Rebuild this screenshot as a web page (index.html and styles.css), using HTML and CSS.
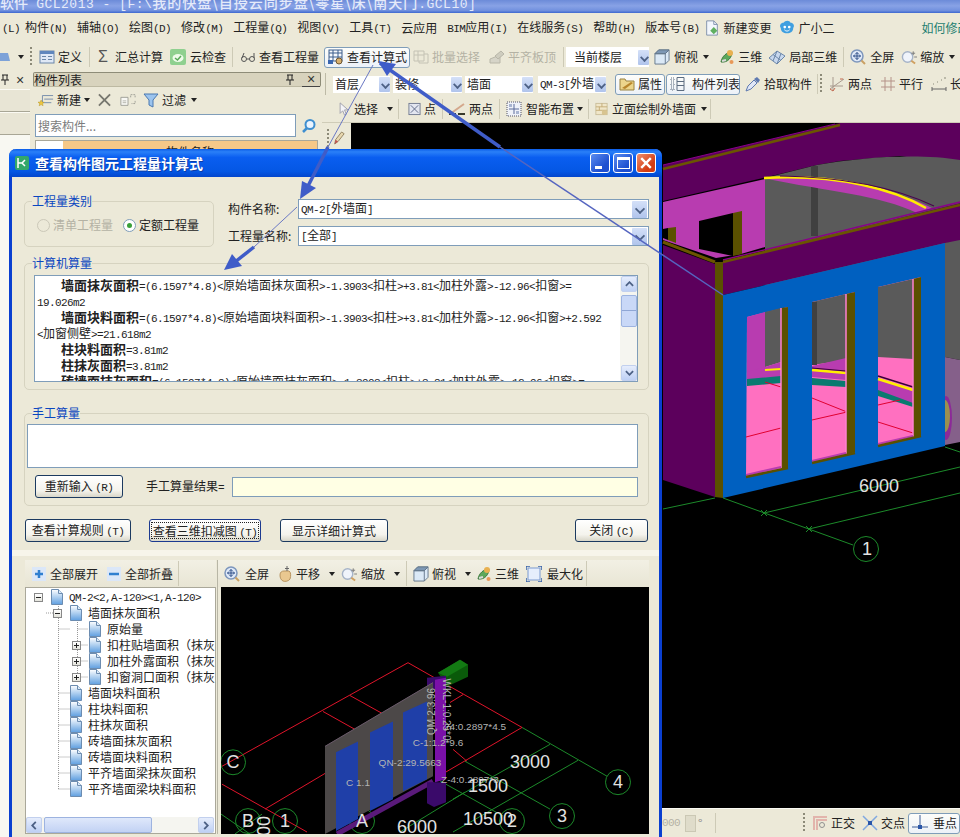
FILE: index.html
```html
<!DOCTYPE html>
<html lang="zh">
<head>
<meta charset="utf-8">
<title>GCL2013</title>
<link rel="stylesheet" href="styles.css">
</head>
<body>
<svg class="defs" aria-hidden="true">
  <defs>
    <linearGradient id="gDoc" x1="0" y1="0" x2="0" y2="1"><stop offset="0" stop-color="#fff"/><stop offset="1" stop-color="#5f9fe0"/></linearGradient>
    <linearGradient id="gBtn" x1="0" y1="0" x2="0" y2="1"><stop offset="0" stop-color="#e6efff"/><stop offset="1" stop-color="#a9c2ee"/></linearGradient>
    <symbol id="doc" viewBox="0 0 14 16"><path d="M1.500.5h7l4 4v11h-11z" fill="url(#gDoc)" stroke="#6c8cb0"/><path d="M8.500.5v4h4" fill="#dcebfa" stroke="#6c8cb0"/></symbol>
    <symbol id="def" viewBox="0 0 16 16"><rect x="1" y="2" width="14" height="12" fill="#dfe8f6" stroke="#6a86a8"/><rect x="1" y="2" width="14" height="3" fill="#5f86bd"/><path d="M3 7.500h4M9 7.500h4M3 10.500h4M9 10.500h4" stroke="#6a86a8"/></symbol>
    <symbol id="cloudchk" viewBox="0 0 16 16"><rect width="16" height="16" rx="2" fill="#8fd08f"/><ellipse cx="8" cy="9" rx="5.500" ry="4" fill="#eefbea"/><path d="M5 9l2.500 2L11 7" fill="none" stroke="#58a858" stroke-width="1.500"/></symbol>
    <symbol id="glasses" viewBox="0 0 16 16"><g fill="none" stroke="#555"><circle cx="4" cy="10" r="2.500"/><circle cx="12" cy="10" r="2.500"/><path d="M6.500 10h3M2 9l2-5M14 9V4"/></g></symbol>
    <symbol id="calc" viewBox="0 0 16 16"><rect x="1" y="1" width="13" height="11" fill="#f6f8fc" stroke="#3a5c8c"/><path d="M1 4h13M5 1v11M10 1v11M1 8h13" stroke="#3a5c8c"/><rect x="0" y="11" width="5" height="4" fill="#3a66b0"/><circle cx="11" cy="12" r="3" fill="#d8b070" stroke="#6e5630"/></symbol>
    <symbol id="batch" viewBox="0 0 16 16"><g fill="none" stroke="#c4c2b4"><path d="M1 2h10v10H1zM1 6h10M5 2v10M11 5h4v9H6v-2"/></g></symbol>
    <symbol id="flat" viewBox="0 0 16 16"><path d="M1 10l10-4v8H1z" fill="#d6d4c8" stroke="#b8b6a8"/><path d="M6 7l6-5 3 3-6 5z" fill="#cfcdbf" stroke="#b8b6a8"/></symbol>
    <symbol id="cube" viewBox="0 0 17 17"><path d="M1 5l4-4h11v11l-4 4H1z" fill="#dbe9f6" stroke="#64788c"/><path d="M1 5l4-4h11l-4 4z" fill="#7d97b4" stroke="#64788c"/><path d="M12 5v11M12 5l4-4M1 5h11" fill="none" stroke="#64788c"/></symbol>
    <symbol id="tri" viewBox="0 0 16 16"><path d="M2 13C3 7 8 3 13 3c0 5-4 11-11 10z" fill="#5ca85c" stroke="#3d7a3d"/><circle cx="11" cy="4" r="3" fill="#e8b050"/><path d="M3 12l4-1" stroke="#d9d9d9" stroke-width="2"/><circle cx="12.500" cy="13" r="2" fill="#e89858"/></symbol>
    <symbol id="local" viewBox="0 0 16 16"><path d="M0 9l8-7 8 5-8 8z" fill="#c8d8ee" stroke="#6b86a8"/><path d="M4 5.500l8 6M8 2l-4 10M12 4.500L8 15" stroke="#6b86a8" fill="none"/></symbol>
    <symbol id="full" viewBox="0 0 16 16"><circle cx="7" cy="7" r="6" fill="#dfe9f8" stroke="#7d96bc" stroke-width="1.500"/><path d="M3.500 7h7M7 3.500v7M3.500 7l1.500-1.500M3.500 7L5 8.500M10.500 7L9 5.500M10.500 7L9 8.500M7 3.500L5.500 5M7 3.500L8.500 5M7 10.500L5.500 9M7 10.500L8.500 9" stroke="#2f4f88" fill="none"/><path d="M11.500 11.500l3.500 3.500" stroke="#caa064" stroke-width="2"/></symbol>
    <symbol id="zoom" viewBox="0 0 17 16"><circle cx="7" cy="8" r="5.500" fill="#f0f4fb" stroke="#a6b4c8" stroke-width="1.500"/><path d="M11 12l4 3" stroke="#d0a060" stroke-width="2"/><path d="M13 2v4M11 4h4M14 8h3" stroke="#7c7c7c"/></symbol>
    <symbol id="newc" viewBox="0 0 18 16"><path d="M5 3h12M7 7h10M5 11h10M5 3v8" stroke="#6f86a8" fill="none"/><path d="M3.500 8l1 2.300 2.400.2-1.800 1.600.6 2.400-2.200-1.300-2.200 1.300.6-2.400L0 10.500l2.500-.2z" fill="#f0c840" stroke="#b09020" stroke-width=".5"/></symbol>
    <symbol id="xg" viewBox="0 0 14 14"><path d="M1 1l12 12M13 1L1 13" stroke="#77776f" stroke-width="2"/></symbol>
    <symbol id="copy" viewBox="0 0 18 16"><path d="M1 5h8v9H1z" fill="#f8f8f4" stroke="#9a9a92"/><path d="M3 9h4M3 11h4" stroke="#b0b0a8"/><path d="M12 2h5v3M17 9v3h-4M12 5V2" fill="none" stroke="#9a9a92" stroke-dasharray="2 1"/></symbol>
    <symbol id="funnel" viewBox="0 0 16 16"><path d="M1 2h14L10 8v7l-4-2V8z" fill="#9cc4ee" stroke="#4a78b0"/></symbol>
    <symbol id="mag" viewBox="0 0 16 16"><circle cx="9" cy="6.500" r="4.500" fill="#eaf4ff" stroke="#3f8fd0" stroke-width="2"/><path d="M6 10l-4 4" stroke="#3f8fd0" stroke-width="2.500"/></symbol>
    <symbol id="prop" viewBox="0 0 16 16"><path d="M1 3h5l1 2h8v9H1z" fill="#ecd58c" stroke="#9a8240"/><path d="M3 12l9-6 2 1-8 6z" fill="#b8862c"/></symbol>
    <symbol id="list" viewBox="0 0 16 16"><g fill="none" stroke="#5c6c80"><path d="M7 1.500h7v13H7zM7 5.500h7M7 9.500h7"/><path d="M1 2h3v3H1zM1 7h3v3H1zM1 12h3v2H1z" stroke-dasharray="1 1"/></g></symbol>
    <symbol id="pick" viewBox="0 0 16 16"><path d="M1 15l2-5 6-6 3 3-6 6z" fill="#dfe6f6" stroke="#5f7ab0"/><path d="M9 3l3-2 3 3-2 3z" fill="#5f7ab0"/></symbol>
    <symbol id="twop" viewBox="0 0 16 16"><path d="M4 1v14M1 13L15 3M1 10h13" stroke="#a89a8e" fill="none"/><path d="M1 13l3 2 2-3M11 3l3 0" stroke="#c46a50" fill="none"/></symbol>
    <symbol id="para" viewBox="0 0 16 16"><path d="M5 1v14M11 1v14M1 5h14M1 11h14" stroke="#b49288" fill="none"/></symbol>
    <symbol id="leng" viewBox="0 0 16 16"><path d="M1 13h14M1 11v4M15 11v4" stroke="#666" fill="none"/><path d="M2 8h1M6 6h1M10 4h1M13 2h2" stroke="#8a8a7a"/></symbol>
    <symbol id="sel" viewBox="0 0 14 16"><path d="M2 1l9 8H7l2 5-2 1-2-5-3 3z" fill="#f4f4f8" stroke="#9a9aa8"/></symbol>
    <symbol id="pt" viewBox="0 0 14 14"><rect x="1" y="1" width="12" height="12" fill="#e3e6f0" stroke="#727a90"/><path d="M3 3l8 8M11 3l-8 8" stroke="#5a6684"/></symbol>
    <symbol id="line2" viewBox="0 0 16 14"><path d="M1 12L15 2" stroke="#d4a88c" stroke-width="2"/><path d="M0 12h7M9 12h7" stroke="#3a3a2c" stroke-width="2"/></symbol>
    <symbol id="smart" viewBox="0 0 16 16"><rect x="1" y="1" width="14" height="14" fill="#eef1f8" stroke="#556" stroke-dasharray="1 1"/><path d="M8 3v10M3 8h10" stroke="#5a6a9a"/><path d="M3 3h3v3H3zM10 10h3v3h-3z" fill="#a8b4d0"/></symbol>
    <symbol id="elev" viewBox="0 0 15 15"><rect x="1" y="1" width="13" height="13" fill="#f0e6c8" stroke="#c8bc98"/><path d="M1 5h13M1 9h13M8 1v4M5 5v4M10 9v5" stroke="#c0a870"/><rect x="8" y="9" width="6" height="5" fill="#d8c490"/></symbol>
    <symbol id="plus" viewBox="0 0 16 16"><rect x="1" y="1" width="14" height="14" fill="#dbe7f8"/><path d="M8 4v8M4 8h8" stroke="#2f7fd0" stroke-width="2.500"/></symbol>
    <symbol id="minus" viewBox="0 0 16 16"><rect x="1" y="1" width="14" height="14" fill="#dbe7f8"/><path d="M3 8h10" stroke="#2f7fd0" stroke-width="2.500"/></symbol>
    <symbol id="hand" viewBox="0 0 14 16"><path d="M2 9c0-3 2-4 4-4l5 0c2 1 2 5 1 8-1 2-5 3-7 2-2-1-3-3-3-6z" fill="#eac890" stroke="#b89460"/><path d="M9 0v5M7 2.500h4" stroke="#666"/></symbol>
    <symbol id="maxi" viewBox="0 0 16 16"><rect x="2" y="2" width="12" height="12" fill="#e6eefc" stroke="#7a9ad0"/><path d="M0 4V0h4M12 0h4v4M0 12v4h4M12 16h4v-4" fill="none" stroke="#3660a8" stroke-width="1.500"/></symbol>
    <symbol id="ortho" viewBox="0 0 16 16"><path d="M2 15V2h13M5 15V5h10" fill="none" stroke="#e2b4ac" stroke-width="2"/><circle cx="10" cy="10" r="2.500" fill="none" stroke="#909090"/></symbol>
    <symbol id="cross" viewBox="0 0 16 16"><path d="M1 1l14 14M15 1L1 15" stroke="#80a8e0" stroke-width="1.500"/><rect x="6" y="6" width="4" height="4" fill="#2a56a8"/></symbol>
    <symbol id="perp" viewBox="0 0 16 16"><path d="M8 0v12M0 12h16" stroke="#3c5c98"/><rect x="6" y="10" width="4" height="4" fill="#2a56a8"/></symbol>
    <symbol id="chg" viewBox="0 0 16 18"><path d="M2 1h8l4 4v12H2z" fill="#f2f6fc" stroke="#7a8ca8"/><path d="M10 1v4h4" fill="none" stroke="#7a8ca8"/><path d="M10 8l4 4-4 4-4-4z" fill="#60b060"/></symbol>
    <symbol id="mascot" viewBox="0 0 18 18"><path d="M2 9c-2-3 0-6 3-6 2-3 7-3 8 0 3 0 5 3 3 6 0 4-3 6-7 6s-7-2-7-6z" fill="#3f9fe0"/><circle cx="6.500" cy="8" r="1.500" fill="#fff"/><circle cx="11.500" cy="8" r="1.500" fill="#fff"/><path d="M6 11c2 2 4 2 6 0" stroke="#fff" fill="none"/></symbol>
    <symbol id="pencil" viewBox="0 0 14 18"><path d="M2 16l1-5 7-9 3 2-7 9z" fill="#e8d8b0" stroke="#8a7a58"/><path d="M2 16l1-5 3 2z" fill="#c05050"/></symbol>
    <symbol id="pin" viewBox="0 0 10 12"><path d="M2 1h6M3 1v5M7 1v5M1 6h8M5 6v5" stroke="#222" fill="none"/></symbol>
  </defs>
</svg>

<div class="app">
  <header class="titlebar"><div class="title-text"><b>软件</b> <span class="tl first">GCL2013 - [F:\</span><b class="wide">我的快盘\自授云同步盘\零星\床\南天门</b><span class="tl">.GCL10]</span></div></header>

  <nav class="menubar">
    <span class="menu first"><span class="n">(L)</span></span>
    <span class="menu">构件<span class="n">(N)</span></span>
    <span class="menu">辅轴<span class="n">(O)</span></span>
    <span class="menu">绘图<span class="n">(D)</span></span>
    <span class="menu">修改<span class="n">(M)</span></span>
    <span class="menu">工程量<span class="n">(Q)</span></span>
    <span class="menu">视图<span class="n">(V)</span></span>
    <span class="menu">工具<span class="n">(T)</span></span>
    <span class="menu">云应用</span>
    <span class="menu"><span class="n">BIM</span>应用<span class="n">(I)</span></span>
    <span class="menu">在线服务<span class="n">(S)</span></span>
    <span class="menu">帮助<span class="n">(H)</span></span>
    <span class="menu">版本号<span class="n">(B)</span></span>
    <span class="ti"><svg class="ic"><use href="#chg"/></svg>新建变更</span>
    <span class="ti ml8"><svg class="ic"><use href="#mascot"/></svg>广小二</span>
    <span class="menu-sep"></span>
    <span class="help">如何修改</span>
  </nav>

  <div class="toolbar tb-main">
    <svg class="ic-s" viewBox="0 0 10 8"><path d="M0 0h8l2 8H0z" fill="#7da2d8"/></svg>
    <i class="drop ml8"></i>
    <i class="grip ml6"></i>
    <span class="ti ml7"><svg class="ic"><use href="#def"/></svg>定义</span>
    <i class="sep ml7"></i>
    <span class="ti ml8"><span class="sigma">Σ</span>汇总计算</span>
    <span class="ti ml7"><svg class="ic"><use href="#cloudchk"/></svg><span class="ml1">云检查</span></span>
    <i class="sep ml6"></i>
    <span class="ti ml7"><svg class="ic"><use href="#glasses"/></svg>查看工程量</span>
    <span class="ti active ml5"><svg class="ic"><use href="#calc"/></svg>查看计算式</span>
    <span class="ti off ml3"><svg class="ic"><use href="#batch"/></svg>批量选择</span>
    <span class="ti off ml9"><svg class="ic"><use href="#flat"/></svg>平齐板顶</span>
    <i class="sep ml7"></i>
    <span class="combo c-floor ml2"><span class="combo-text">当前楼层</span><i class="arrow"></i></span>
    <span class="ti ml5"><svg class="ic"><use href="#cube"/></svg><span class="ml1">俯视</span></span>
    <i class="drop ml5"></i>
    <span class="ti ml10"><svg class="ic"><use href="#tri"/></svg>三维</span>
    <span class="ti ml7"><svg class="ic"><use href="#local"/></svg><span class="ml1">局部三维</span></span>
    <i class="sep ml6"></i>
    <span class="ti ml6"><svg class="ic"><use href="#full"/></svg><span class="ml1">全屏</span></span>
    <span class="ti ml7"><svg class="ic"><use href="#zoom"/></svg>缩放</span>
    <i class="drop ml5"></i>
  </div>

  <div class="work">
    <aside class="strip">
      <div class="strip-head"><svg class="pin"><use href="#pin"/></svg><span class="x">×</span></div>
      <div class="strip-btn"></div>
      <div class="strip-btn"></div>
      <div class="strip-empty"></div>
    </aside>

    <aside class="panel">
      <div class="panel-head"><span>构件列表</span><svg class="pin"><use href="#pin"/></svg><span class="x boxed">×</span></div>
      <div class="panel-tools">
        <span class="ti"><svg class="ic"><use href="#newc"/></svg>新建</span><i class="drop ml3"></i>
        <svg class="ic-x ml8"><use href="#xg"/></svg>
        <svg class="ic ml9"><use href="#copy"/></svg>
        <span class="ti ml7"><svg class="ic"><use href="#funnel"/></svg>过滤</span><i class="drop ml5"></i>
      </div>
      <div class="search"><span class="search-box">搜索构件...</span><svg class="ic search-ic"><use href="#mag"/></svg></div>
      <div class="comp-list"><span class="comp-gutter"></span><span class="comp-row">构件名称</span></div>
    </aside>

    <main class="main">
      <div class="toolbar tb-sel">
        <i class="grip-v"></i>
        <span class="combo c1"><span class="combo-text">首层</span><i class="arrow"></i></span>
        <span class="combo c2"><span class="combo-text">装修</span><i class="arrow"></i></span>
        <span class="combo c3"><span class="combo-text">墙面</span><i class="arrow"></i></span>
        <span class="combo c4"><span class="combo-text"><span class="n">QM-3[</span>外墙</span><i class="arrow"></i></span>
        <span class="ti active b-prop"><svg class="ic"><use href="#prop"/></svg>属性</span>
        <span class="ti active b-list"><svg class="ic"><use href="#list"/></svg><span class="ml3">构件列表</span></span>
        <span class="ti ml5"><svg class="ic"><use href="#pick"/></svg>拾取构件</span>
        <i class="sep ml5"></i><i class="grip ml2"></i>
        <span class="ti ml7"><svg class="ic"><use href="#twop"/></svg>两点</span>
        <span class="ti ml8"><svg class="ic"><use href="#para"/></svg>平行</span>
        <span class="ti ml8"><svg class="ic"><use href="#leng"/></svg>长度</span>
      </div>

      <div class="toolbar tb-draw">
        <span class="ti"><svg class="ic-x"><use href="#sel"/></svg>选择</span><i class="drop ml9"></i>
        <i class="sep ml5"></i>
        <span class="ti ml9"><svg class="ic-x"><use href="#pt"/></svg>点</span>
        <i class="sep ml6"></i>
        <span class="ti ml6"><svg class="ic"><use href="#line2"/></svg><span class="ml1">两点</span></span>
        <i class="sep ml6"></i>
        <span class="ti ml6"><svg class="ic"><use href="#smart"/></svg><span class="ml1">智能布置</span></span><i class="drop ml3"></i>
        <i class="sep ml5"></i>
        <span class="ti ml6"><svg class="ic-x"><use href="#elev"/></svg><span class="ml1">立面绘制外墙面</span></span><i class="drop ml5"></i>
        <i class="sep ml3"></i>
      </div>

      <div class="view">
        <div class="view-strip"><i class="grip-h"></i><svg class="ic-p"><use href="#pencil"/></svg></div>
        <svg class="canvas" viewBox="351 123 609 685" preserveAspectRatio="none">
          <!-- back wall -->
          <path d="M663 165L840 123H960V165L900 156 840 161 817 165 763 178 663 201z" fill="#5c005c"/>
          <path d="M663 169L840 125" stroke="#6b5500" stroke-width="2.500" fill="none"/>
          <path d="M663 165L835 124" stroke="#8a008a" fill="none"/>
          <path d="M765 178L817 165C860 157 920 153 960 160V240L945 243V300H765z" fill="#5a5a5a"/>
          <path d="M811 166h7v70h-7z" fill="#404040"/>
          <path d="M663 202L765 179V247L741 254 716 258 663 240z" fill="#b83cb0"/>
          <path d="M699 221L733 213V256L699 249z" fill="#000"/>
          <path d="M733 213L742 211V254L733 256z" fill="#5a5000"/>
          <path d="M663 229L668 228V240L663 238z" fill="#000"/>
          <path d="M668 228L676 227V243L668 240z" fill="#5a5000"/>
          <!-- arch -->
          <path d="M763 178C840 175 895 190 932 208L917 213C880 195 830 192 763 178z" fill="#b83cb0"/>
          <path d="M764 178C840 174 895 190 926 208" fill="none" stroke="#ffee00" stroke-width="2.500"/>
          <path d="M780 176C850 177 900 190 934 206" fill="none" stroke="#4a0050" stroke-width="1.200"/>
          <!-- top beam -->
          <path d="M723 262L960 203V242L945 243 723 295z" fill="#5c005c"/>
          <path d="M723 260L960 202" stroke="#8a008a" stroke-width="1.500"/>
          <path d="M723 262L960 205" stroke="#6b5500" stroke-width="2.500"/>
          <!-- left wall -->
          <path d="M663 245L715 264V497L663 480z" fill="#5c005c"/>
          <path d="M663 242L715 262" stroke="#6b5500" stroke-width="3"/>
          <path d="M715 262h8V498L715 497z" fill="#5a5000"/>
          <!-- right side -->
          <path d="M945 243L960 240V360L945 357z" fill="#5a5a5a"/>
          <path d="M945 357L960 360V442L945 445z" fill="#85608a"/>
          <ellipse cx="946" cy="418" rx="6" ry="22" fill="#8c2a98"/>
          <ellipse cx="945" cy="416" rx="5" ry="16" fill="#9a9050"/>
          <!-- blue front -->
          <path d="M723 295L945 243V446L723 498z" fill="#0060c0"/>
          <!-- window 1 -->
          <path d="M747 317L788 307V468L746 477z" fill="#ff70c0"/>
          <path d="M747 317L765 312V378L747 381z" fill="#b83cb0"/>
          <path d="M765 312L781 308V362L765 367z" fill="#5a5a5a"/>
          <path d="M765 367L781 362V377L747 379V372z" fill="#b83cb0"/>
          <path d="M747 379L781 376V383L747 386z" fill="#0a7a70"/>
          <path d="M765 370L781 369" stroke="#ffee00" stroke-width="2"/>
          <path d="M765 382L781 387M746 437L781 428" stroke="#e00030"/>
          <path d="M781 308L788 307V468L781 470z" fill="#5a5000"/>
          <path d="M781 308V470" stroke="#ff80d0" stroke-width="1.500"/>
          <path d="M746 475L781 467" stroke="#b83cb0" stroke-width="2"/>
          <path d="M746 477L788 468" stroke="#5a5000" stroke-width="2.500"/>
          <!-- window 2 -->
          <path d="M812 302L855 292V452L812 462z" fill="#ff70c0"/>
          <path d="M812 302L846 294V360L812 365z" fill="#5a5a5a"/>
          <path d="M812 302h5V365H812z" fill="#404040"/>
          <path d="M812 366L846 358V380L812 377z" fill="#b83cb0"/>
          <path d="M812 370L846 373" stroke="#ffee00" stroke-width="2.500"/>
          <path d="M812 368L846 371" stroke="#3a003a"/>
          <path d="M812 378L846 381V387L812 385z" fill="#0a7a70"/>
          <path d="M812 398L847 412M812 420L847 412" stroke="#e00030"/>
          <path d="M846 294L855 292V452L846 455z" fill="#5a5000"/>
          <path d="M846 294V455" stroke="#ff80d0" stroke-width="1.500"/>
          <path d="M812 461L846 453" stroke="#b83cb0" stroke-width="2"/>
          <path d="M812 463L855 453" stroke="#5a5000" stroke-width="2.500"/>
          <!-- window 3 -->
          <path d="M878 287L921 277V436L878 446z" fill="#ff70c0"/>
          <path d="M878 287L913 279V359L878 357z" fill="#5a5a5a"/>
          <path d="M878 378L913 390V405L878 392z" fill="#b83cb0"/>
          <path d="M878 379L913 390" stroke="#ffee00" stroke-width="2.500"/>
          <path d="M878 376L913 387" stroke="#3a003a" stroke-width="1.500"/>
          <path d="M878 390L913 403V407L878 396z" fill="#0a7a70"/>
          <path d="M878 405L900 400M878 422L913 433" stroke="#e00030"/>
          <path d="M913 279L921 277V436L913 438z" fill="#5a5000"/>
          <path d="M913 279V438" stroke="#ff80d0" stroke-width="1.500"/>
          <path d="M878 444L913 436" stroke="#b83cb0" stroke-width="2"/>
          <path d="M878 446L921 436" stroke="#5a5000" stroke-width="2.500"/>
          <!-- grid -->
          <g stroke="#1c8a2a" fill="none">
            <path d="M663 509L715 498M723 498L853 545M764 513L960 467M809 529L960 493M945 447L960 452"/>
            <path d="M761 510l6 6M767 510l-6 6M806 526l6 6M812 526l-6 6"/>
            <circle cx="866" cy="549" r="12.500"/>
          </g>
          <g class="dim">
            <text x="879" y="492">6000</text>
            <text x="867" y="555">1</text>
          </g>
        </svg>
      </div>

      <div class="status">
        <span class="spin-text n">000</span>
        <span class="spin"></span>
        <span class="deg">°</span>
        <i class="sep ml8"></i>
        <i class="grip st-grip"></i>
        <span class="ti ml7"><svg class="ic"><use href="#ortho"/></svg>正交</span>
        <span class="ti ml7"><svg class="ic"><use href="#cross"/></svg>交点</span>
        <span class="ti active st-perp"><svg class="ic"><use href="#perp"/></svg><span class="ml2">垂点</span></span>
      </div>
    </main>
  </div>

  <section class="dialog">
    <div class="dlg-title">
      <svg class="dlg-icon" viewBox="0 0 14 14"><rect width="14" height="14" rx="2" fill="#33a76a"/><path d="M3 2v10M3 7h4l3-3M7 7l3 3" stroke="#fff" stroke-width="1.500" fill="none"/></svg>
      <span class="dlg-caption">查看构件图元工程量计算式</span>
      <span class="wbtn"><i class="w-min"></i></span>
      <span class="wbtn"><i class="w-max"></i></span>
      <span class="wbtn close"><svg viewBox="0 0 10 10"><path d="M1 1l8 8M9 1l-8 8" stroke="#fff" stroke-width="2"/></svg></span>
    </div>

    <div class="dlg-body">
      <div class="row-a">
        <div class="group g-type">
          <span class="legend">工程量类别</span>
          <div class="radios">
            <span class="radio off"><i></i>清单工程量</span>
            <span class="radio on"><i></i>定额工程量</span>
          </div>
        </div>
        <div class="fields">
          <div class="field"><label>构件名称:</label><span class="combo dlg-combo"><span class="combo-text"><span class="n">QM-2[</span>外墙面<span class="n">]</span></span><i class="arrow"></i></span></div>
          <div class="field"><label>工程量名称:</label><span class="combo dlg-combo"><span class="combo-text"><span class="n">[</span>全部<span class="n">]</span></span><i class="arrow"></i></span></div>
        </div>
      </div>

      <div class="group g-calc">
        <span class="legend">计算机算量</span>
        <div class="formula">
          <div class="formula-text">
            <div class="ln ind"><b>墙面抹灰面积</b><span class="n">=(6.1597*4.8)&lt;</span>原始墙面抹灰面积<span class="n">&gt;-1.3903&lt;</span>扣柱<span class="n">&gt;+3.81&lt;</span>加柱外露<span class="n">&gt;-12.96&lt;</span>扣窗<span class="n">&gt;=</span></div>
            <div class="ln"><span class="n">19.026m2</span></div>
            <div class="ln ind"><b>墙面块料面积</b><span class="n">=(6.1597*4.8)&lt;</span>原始墙面块料面积<span class="n">&gt;-1.3903&lt;</span>扣柱<span class="n">&gt;+3.81&lt;</span>加柱外露<span class="n">&gt;-12.96&lt;</span>扣窗<span class="n">&gt;+2.592</span></div>
            <div class="ln"><span class="n">&lt;</span>加窗侧壁<span class="n">&gt;=21.618m2</span></div>
            <div class="ln ind"><b>柱块料面积</b><span class="n">=3.81m2</span></div>
            <div class="ln ind"><b>柱抹灰面积</b><span class="n">=3.81m2</span></div>
            <div class="ln ind"><b>砖墙面抹灰面积</b><span class="n">=(6.1597*4.8)&lt;</span>原始墙面抹灰面积<span class="n">&gt;-1.3903&lt;</span>扣柱<span class="n">&gt;+3.81&lt;</span>加柱外露<span class="n">&gt;-12.96&lt;</span>扣窗<span class="n">&gt;=</span></div>
          </div>
          <div class="vscroll">
            <span class="sb-btn"><svg viewBox="0 0 10 6"><path d="M1 5l4-4 4 4" stroke="#4d6185" stroke-width="2" fill="none"/></svg></span>
            <span class="sb-thumb v"></span>
            <span class="sb-btn"><svg viewBox="0 0 10 6"><path d="M1 1l4 4 4-4" stroke="#4d6185" stroke-width="2" fill="none"/></svg></span>
          </div>
        </div>
      </div>

      <div class="group g-hand">
        <span class="legend">手工算量</span>
        <div class="hand-area"></div>
        <div class="hand-row">
          <button class="btn b-reset">重新输入 <span class="n">(R)</span></button>
          <span class="hand-label">手工算量结果<span class="n">=</span></span>
          <span class="hand-result"></span>
        </div>
      </div>

      <div class="btn-row">
        <button class="btn b-rule">查看计算规则 <span class="n">(T)</span></button>
        <button class="btn b-3d"><span class="focus">查看三维扣减图 <span class="n">(T)</span></span></button>
        <button class="btn b-detail">显示详细计算式</button>
        <button class="btn b-close">关闭 <span class="n">(C)</span></button>
      </div>

      <div class="band"></div>

      <div class="lower">
        <div class="tree-pane">
          <div class="toolbar tb-tree">
            <span class="ti tt1"><svg class="ic"><use href="#plus"/></svg>全部展开</span>
            <span class="ti ml8"><svg class="ic"><use href="#minus"/></svg>全部折叠</span>
            <i class="sep ml5"></i>
          </div>
          <div class="tree">
            <svg class="tree-lines" viewBox="0 0 190 246">
              <path d="M32.500 18V202M20 25h8M32.500 41H44M51.500 34V90M51.500 41H62M51.500 57H62M51.500 73H62M51.500 89H62M32.500 105H44M32.500 121H44M32.500 137H44M32.500 153H44M32.500 169H44M32.500 185H44M32.500 201H44" stroke="#999" stroke-dasharray="1 1" fill="none"/>
            </svg>
            <div class="node l0"><i class="exp minus"></i><svg class="ndoc"><use href="#doc"/></svg><span><span class="n">QM-2&lt;2,A-120&gt;&lt;1,A-120&gt;</span></span></div>
            <div class="node l1"><i class="exp minus"></i><svg class="ndoc"><use href="#doc"/></svg><span>墙面抹灰面积</span></div>
            <div class="node l2"><i class="exp none"></i><svg class="ndoc"><use href="#doc"/></svg><span>原始量</span></div>
            <div class="node l2"><i class="exp plus"></i><svg class="ndoc"><use href="#doc"/></svg><span>扣柱贴墙面积（抹灰面积）</span></div>
            <div class="node l2"><i class="exp plus"></i><svg class="ndoc"><use href="#doc"/></svg><span>加柱外露面积（抹灰面积）</span></div>
            <div class="node l2"><i class="exp plus"></i><svg class="ndoc"><use href="#doc"/></svg><span>扣窗洞口面积（抹灰面积）</span></div>
            <div class="node l1"><i class="exp none"></i><svg class="ndoc"><use href="#doc"/></svg><span>墙面块料面积</span></div>
            <div class="node l1"><i class="exp none"></i><svg class="ndoc"><use href="#doc"/></svg><span>柱块料面积</span></div>
            <div class="node l1"><i class="exp none"></i><svg class="ndoc"><use href="#doc"/></svg><span>柱抹灰面积</span></div>
            <div class="node l1"><i class="exp none"></i><svg class="ndoc"><use href="#doc"/></svg><span>砖墙面抹灰面积</span></div>
            <div class="node l1"><i class="exp none"></i><svg class="ndoc"><use href="#doc"/></svg><span>砖墙面块料面积</span></div>
            <div class="node l1"><i class="exp none"></i><svg class="ndoc"><use href="#doc"/></svg><span>平齐墙面梁抹灰面积</span></div>
            <div class="node l1"><i class="exp none"></i><svg class="ndoc"><use href="#doc"/></svg><span>平齐墙面梁块料面积</span></div>
            <div class="hscroll">
              <span class="sb-btn h"><svg viewBox="0 0 6 10"><path d="M5 1L1 5l4 4" stroke="#4d6185" stroke-width="2" fill="none"/></svg></span>
              <span class="sb-thumb hz"></span>
              <span class="sb-gap"></span>
              <span class="sb-btn h"><svg viewBox="0 0 6 10"><path d="M1 1l4 4-4 4" stroke="#4d6185" stroke-width="2" fill="none"/></svg></span>
            </div>
          </div>
        </div>

        <div class="view-pane">
          <div class="toolbar tb-view">
            <span class="ti ml6"><svg class="ic"><use href="#full"/></svg><span class="ml2">全屏</span></span>
            <span class="ti ml9"><svg class="ic-h"><use href="#hand"/></svg><span class="ml1">平移</span></span><i class="drop ml9"></i>
            <span class="ti ml6"><svg class="ic"><use href="#zoom"/></svg><span class="ml1">缩放</span></span><i class="drop ml9"></i>
            <i class="sep ml6"></i>
            <span class="ti ml6"><svg class="ic"><use href="#cube"/></svg>俯视</span><i class="drop ml9"></i>
            <span class="ti ml5"><svg class="ic"><use href="#tri"/></svg>三维</span>
            <span class="ti ml7"><svg class="ic"><use href="#maxi"/></svg><span class="ml2">最大化</span></span>
            <i class="sep ml3"></i>
          </div>
          <svg class="mini" viewBox="221 587 428 248" preserveAspectRatio="none">
            <g stroke="#e0142a" fill="none">
              <path d="M408 663L222 767M408 663L522 728L437 778M323 712L403 757M350 696L393 720M463 695L450 703M222 785L307 833M265 810L327 773M453 750L467 762"/>
            </g>
            <g stroke="#1c8a2a" fill="none">
              <path d="M522 728L607 777M550 745L453 800M578 761L453 833M465 762L550 810M437 780L503 817M465 793L400 833M221 815L250 835M235 835L262 815"/>
              <circle cx="233" cy="763" r="12.500"/><circle cx="248" cy="822" r="12.500"/><circle cx="285" cy="822" r="12.500"/><circle cx="362" cy="822" r="12.500"/><circle cx="512" cy="822" r="12.500"/><circle cx="562" cy="817" r="12.500"/><circle cx="618" cy="783" r="12.500"/>
            </g>
            <path d="M438 673L460 660 468 665V677L447 687z" fill="#0a5a0a"/>
            <path d="M438 673L460 660 468 665 447 677z" fill="#137a13"/>
            <path d="M427 678L446 676V690H427z" fill="#3a0a6a"/>
            <path d="M325 747L433 683V777L325 835z" fill="#4c4848"/>
            <path d="M325 747L433 683" stroke="#6a5a6a"/>
            <path d="M336 753L358 742V820L336 832z" fill="#1f3fa8"/>
            <path d="M370 733L393 722V800L370 812z" fill="#1f3fa8"/>
            <path d="M403 713L427 702V780L403 792z" fill="#1f3fa8"/>
            <path d="M337 835L433 782" stroke="#5a1a7a" stroke-width="5"/>
            <path d="M427 783H446V803L434 808 427 804z" fill="#3a0a6a"/>
            <path d="M435 680L446 678V780L435 783z" fill="#7a10a8"/>
            <g class="mini-label">
              <text x="475" y="731" text-anchor="middle">24:0.2897*4.5</text>
              <text x="438" y="747" text-anchor="middle">C-1:1.2*9.6</text>
              <text x="410" y="767" text-anchor="middle">QN-2:29.5663</text>
              <text x="358" y="787" text-anchor="middle">C 1.1</text>
              <text x="470" y="784" text-anchor="middle">Z-4:0.2897*3</text>
              <text transform="translate(435 712) rotate(-90)" text-anchor="middle">QM-2:3.96</text>
              <text transform="translate(443 710) rotate(90)" text-anchor="middle">WKL-1:0.25*0</text>
            </g>
            <g class="dim">
              <text x="530" y="769" text-anchor="middle">3000</text>
              <text x="488" y="793" text-anchor="middle">1500</text>
              <text x="488" y="826" text-anchor="middle">10500</text>
              <text x="417" y="834" text-anchor="middle">6000</text>
              <text x="233" y="769" text-anchor="middle">C</text>
              <text x="248" y="828" text-anchor="middle">B</text>
              <text x="285" y="828" text-anchor="middle">1</text>
              <text x="362" y="828" text-anchor="middle">A</text>
              <text x="512" y="828" text-anchor="middle">2</text>
              <text x="562" y="823" text-anchor="middle">3</text>
              <text x="618" y="789" text-anchor="middle">4</text>
              <text transform="translate(257 827) rotate(90)" text-anchor="middle">00</text>
            </g>
          </svg>
        </div>
      </div>
    </div>
  </section>

  <svg class="arrows" viewBox="0 0 960 837">
    <path d="M380 63L500 147" stroke="#3f5cc8" stroke-width="3.500" fill="none"/>
    <path d="M500 147L723 295" stroke="#5565c0" stroke-width="1.500" fill="none"/>
    <path d="M378 61L396 64 387 76z" fill="#3f5cc8"/>
    <path d="M373 65L328 147" stroke="#6a78c4" fill="none"/>
    <path d="M328 147L308 186" stroke="#3f5cc8" stroke-width="3.500" fill="none"/>
    <path d="M300 199L302 181 316 188z" fill="#3f5cc8"/>
    <path d="M297 207L254 247" stroke="#6a78c4" fill="none"/>
    <path d="M254 247L235 262" stroke="#3f5cc8" stroke-width="3.500" fill="none"/>
    <path d="M224 270L232 254 242 266z" fill="#3f5cc8"/>
  </svg>
</div>
</body>
</html>
```

FILE: styles.css
```css
* { box-sizing: border-box; }
html, body { margin: 0; padding: 0; background: #ece9d8; }
body { width: 960px; height: 837px; overflow: hidden; font: 12px/16px "Noto Sans CJK SC", "Liberation Sans", sans-serif; color: #222; }
.defs { position: absolute; width: 0; height: 0; }
.app { position: relative; width: 960px; height: 837px; overflow: hidden; display: flex; flex-direction: column; background: #ece9d8; }

i { display: block; font-style: normal; }
.n { font-family: "Liberation Mono", monospace; font-size: 11px; letter-spacing: -.6px; }
.ml1 { margin-left: 1px; } .ml2 { margin-left: 2px; } .ml3 { margin-left: 3px; } .ml5 { margin-left: 5px; }
.ml6 { margin-left: 6px; } .ml7 { margin-left: 7px; } .ml8 { margin-left: 8px; } .ml9 { margin-left: 9px; } .ml10 { margin-left: 10px; }

.titlebar { flex: 0 0 13px; overflow: hidden; background: linear-gradient(#6c8bd8, #88a2e6 45%, #7291de 80%, #3d68d0); }
.title-text { margin-top: -5px; white-space: nowrap; line-height: 14px; color: #e4eafa; font-size: 14px; }
.title-text b { font-weight: 500; }
.title-text b.wide { letter-spacing: 1px; }
.tl { font-family: "Liberation Mono", monospace; font-size: 13px; letter-spacing: .5px; }
.tl.first { margin-left: 5px; }

.menubar { flex: 0 0 30px; display: flex; align-items: center; white-space: nowrap; background: #ece9d8; }
.menu { padding: 0 5px; }
.menu.first { padding: 0 0 0 2px; width: 22px; }
.menu-sep { margin-left: 8px; width: 1px; height: 30px; background: #d0cdb8; }
.help { margin-left: 79px; color: #1f7f70; }

.toolbar { display: flex; align-items: center; white-space: nowrap; background: #ece9d8; }
.tb-main { flex: 0 0 29px; padding-bottom: 1px; }
.ti { display: inline-flex; align-items: center; gap: 3px; flex: none; }
.ti.off { color: #b4b2a4; }
.ti.active { height: 21px; padding: 0 2px 0 3px; background: linear-gradient(#fdfdfa, #ecf1f8); border: 1px solid #7f9db9; border-radius: 3px; }
.ic { width: 16px; height: 16px; flex: none; display: block; }
.ic-x { width: 13px; height: 14px; flex: none; display: block; }
.ic-h { width: 14px; height: 16px; flex: none; display: block; }
.ic-s { width: 10px; height: 8px; flex: none; margin-left: 0; }
.sigma { width: 12px; font: 16px/16px "Liberation Sans", sans-serif; color: #555; margin-right: 2px; }
.drop { width: 0; height: 0; border: 3.5px solid transparent; border-top: 4px solid #222; border-bottom: 0; flex: none; }
.sep { width: 1px; height: 20px; background: #cdcab6; flex: none; }
.grip { width: 2px; height: 20px; flex: none; background: repeating-linear-gradient(#8c8a78 0 2px, transparent 2px 4px); }

.combo { display: flex; align-items: center; justify-content: space-between; background: #fff; flex: none; overflow: hidden; }
.combo-text { padding-left: 2px; white-space: nowrap; overflow: hidden; }
.arrow { position: relative; width: 11px; height: 15px; flex: none; background: linear-gradient(#d4e0f8, #b0c4ec); border-radius: 1px; }
.arrow::after { content: ""; position: absolute; left: 3px; top: 4px; width: 5px; height: 5px; border: solid #4d6185; border-width: 0 2px 2px 0; transform: rotate(45deg) scale(.9); }
.c-floor { width: 83px; height: 20px; padding-right: 0; }
.c-floor .combo-text { padding-left: 8px; }

.work { flex: 1; display: flex; min-height: 0; }
.strip { width: 30px; flex: none; display: flex; flex-direction: column; }
.strip-head { height: 16px; display: flex; align-items: center; gap: 6px; padding-left: 0; flex: none; }
.pin { width: 10px; height: 12px; flex: none; }
.x { font: 14px/14px "Liberation Sans", sans-serif; color: #333; }
.strip-btn { height: 23px; border-top: 1px solid #fbfaf3; border-bottom: 1px solid #a8a696; background: #e8e5d5; margin-top: 0; flex: none; }
.strip-head + .strip-btn { margin-top: 1px; }
.strip-empty { flex: 1; background: #f8f8f2; }

.panel { width: 288px; margin-left: 3px; flex: none; display: flex; flex-direction: column; }
.panel-head { height: 15px; flex: none; background: #d8d3bd; border: 1px solid #8e8c78; border-bottom-color: #bdb9a2; border-radius: 2px; display: flex; align-items: center; line-height: 11px; }
.panel-head > span:first-child { flex: 1; }
.x.boxed { width: 18px; margin-left: 7px; border-bottom: 1px solid #444; text-align: center; }
.panel-tools { height: 26px; flex: none; display: flex; align-items: center; padding-left: 5px; }
.search { height: 25px; flex: none; display: flex; align-items: center; padding-left: 2px; }
.search-box { width: 261px; height: 23px; background: #fff; border: 1px solid #7f9db9; color: #7c7c7c; line-height: 21px; padding-left: 2px; }
.search-ic { margin-left: 5px; }
.comp-list { margin: 2px 0 0 2px; flex: none; width: 283px; height: 10px; display: flex; line-height: 22px; overflow: hidden; border: 1px solid #aaa89a; border-bottom: 0; }
.comp-gutter { width: 27px; background: #fff; }
.comp-row { flex: 1; background: #f6c888; text-align: center; }

.main { flex: 1; min-width: 0; margin-left: 1px; display: flex; flex-direction: column; }
.tb-sel { height: 24px; flex: none; padding-left: 3px; }
.grip-v { width: 1px; height: 22px; background: #bdbaa6; flex: none; margin-right: 7px; }
.tb-sel .combo { height: 17px; margin-right: 3px; }
.c1 { width: 57px; } .c2 { width: 69px; } .c3 { width: 68px; } .c4 { width: 68px; margin-left: 2px; }
.c4 { margin-right: 9px !important; }
.b-prop { width: 50px; height: 22px; padding-left: 4px; }
.b-list { width: 74px; height: 22px; margin-left: 1px; padding-left: 3px; }
.tb-draw { height: 27px; flex: none; padding-left: 16px; border-bottom: 1px solid #cfccb8; }

.view { flex: 1; min-height: 0; display: flex; }
.view-strip { width: 29px; flex: none; display: flex; gap: 4px; padding: 6px 0 0 5px; align-items: flex-start; }
.grip-h { width: 2px; height: 18px; flex: none; background: repeating-linear-gradient(#8c8a78 0 2px, transparent 2px 4px); }
.ic-p { width: 12px; height: 18px; flex: none; }
.canvas { flex: 1; min-width: 0; height: 100%; display: block; background: #000; }
.dim text { font: 18px "Liberation Sans", sans-serif; fill: #e2e2e2; }
.canvas .dim text { text-anchor: middle; }

.status { height: 29px; flex: none; display: flex; align-items: center; padding-left: 340px; white-space: nowrap; overflow: hidden; border-top: 1px solid #fbfaf3; }
.spin-text { color: #b4b2a4; width: 28px; }
.spin { width: 11px; height: 17px; background: #dfdcca; border: 1px solid #cbc8b4; flex: none; }
.deg { margin-left: 2px; width: 11px; color: #888; }
.st-grip { margin-left: 87px; }
.st-perp { width: 52px; height: 24px; margin-left: 3px; flex: none; }

.dialog { position: absolute; left: 9px; top: 149px; width: 653px; height: 688px; background: #ece9d8; border: solid #0a3fd0; border-width: 0 3px; border-radius: 7px 7px 0 0; }
.dlg-title { height: 28px; margin: 0 -3px; padding: 0 6px 0 6px; display: flex; align-items: center; border-radius: 7px 7px 0 0; background: linear-gradient(#0a5ce8, #2a80f8 10%, #0a5ef0 30%, #0457e4 80%, #0346cc); }
.dlg-icon { width: 14px; height: 14px; flex: none; }
.dlg-caption { flex: 1; margin-left: 6px; color: #fff; font-size: 14px; font-weight: 700; text-shadow: 1px 1px #0a3ca8; }
.wbtn { width: 20px; height: 20px; margin-left: 3px; flex: none; border: 1px solid #fff; border-radius: 3px; background: linear-gradient(135deg, #5b8df0, #1e4fd0 70%); display: flex; align-items: center; justify-content: center; }
.wbtn.close { background: linear-gradient(135deg, #ee9070, #d43c12 70%); }
.wbtn svg { width: 12px; height: 12px; }
.w-min { width: 7px; height: 3px; background: #fff; margin-top: 8px; margin-right: 4px; }
.w-max { width: 13px; height: 12px; border: 1px solid #fff; border-top-width: 3px; }

.dlg-body { padding: 0 0 0 12px; }
.row-a { display: flex; align-items: flex-start; height: 46px; margin-top: 24px; }
.group { position: relative; border: 1px solid #d6d3c0; border-radius: 5px; }
.legend { position: absolute; left: 7px; top: -8px; color: #0a46c0; background: #ece9d8; line-height: 14px; }
.g-type { width: 190px; height: 46px; flex: none; }
.radios { display: flex; align-items: center; padding: 15px 0 0 12px; }
.radio { display: inline-flex; align-items: center; gap: 3px; }
.radio i { width: 13px; height: 13px; border-radius: 50%; background: #fff; border: 1px solid #7f9db9; position: relative; flex: none; }
.radio.off { color: #b4b2a4; margin-right: 10px; }
.radio.off i { background: #ece9d8; border-color: #cbc8b8; }
.radio.on i::after { content: ""; position: absolute; left: 3px; top: 3px; width: 5px; height: 5px; border-radius: 50%; background: #3aa03a; }
.fields { margin-left: 14px; margin-top: -2px; }
.field { display: flex; align-items: center; height: 20px; margin-bottom: 7px; }
.field label { width: 70px; flex: none; }
.dlg-combo { width: 351px; height: 20px; border: 1px solid #7f9db9; padding-right: 1px; }
.dlg-combo .arrow { width: 15px; height: 17px; }
.dlg-combo .arrow::after { left: 4px; top: 4px; width: 6px; height: 6px; }

.g-calc { margin-top: 16px; width: 625px; height: 127px; padding: 11px 0 0 9px; }
.formula { width: 604px; height: 107px; background: #fff; border: 1px solid #7f9db9; display: flex; overflow: hidden; }
.formula-text { flex: 1; min-width: 0; padding: 1px 0 0 2px; overflow: hidden; }
.ln { height: 16px; line-height: 16px; white-space: nowrap; }
.ln.ind { padding-left: 24px; }
.ln b { font-size: 13px; font-weight: 700; }
.vscroll { width: 17px; flex: none; display: flex; flex-direction: column; background: #f5f5f0; }
.sb-btn { display: flex; align-items: center; justify-content: center; width: 16px; height: 16px; flex: none; margin-left: 1px; background: linear-gradient(#e6edfc, #bed0f4); border: 1px solid #c2d0ee; border-radius: 2px; }
.sb-btn svg { width: 9px; height: 6px; }
.sb-btn.h svg { width: 6px; height: 9px; }
.sb-thumb.v { margin: 3px 0 auto 1px; width: 16px; height: 32px; border: 1px solid #9db3e0; border-radius: 2px; background: repeating-linear-gradient(#c9d8f7 0 14px, #8fa6d4 14px 15px, #c9d8f7 15px 16px); }

.g-hand { margin-top: 23px; width: 625px; height: 93px; padding: 10px 0 0 2px; }
.hand-area { width: 611px; height: 44px; background: #fff; border: 1px solid #7f9db9; }
.hand-row { display: flex; align-items: center; margin-top: 7px; }
.btn { display: block; height: 23px; padding: 0; font: inherit; color: #222; line-height: 20px; border: 1px solid #1c3a60; border-radius: 3px; background: linear-gradient(#fff, #f4f3ec 70%, #d8d6c8); text-align: center; white-space: nowrap; flex: none; }
.b-reset { width: 88px; margin-left: 8px; }
.hand-label { margin-left: 23px; }
.hand-result { margin-left: 8px; width: 406px; height: 20px; background: #ffffe4; border: 1px solid #7f9db9; flex: none; }
.btn-row { display: flex; margin-top: 13px; padding-left: 1px; }
.b-rule { width: 106px; }
.b-3d { width: 112px; margin-left: 18px; border-color: #1c3a90; padding: 2px 1px; }
.focus { display: block; height: 17px; line-height: 15px; border: 1px dotted #222; }
.b-detail { width: 108px; margin-left: 19px; }
.b-close { width: 73px; margin-left: 187px; }
.band { height: 6px; margin: 8px 0 4px -12px; width: 647px; background: #f7f5ea; }
.lower { display: flex; margin-left: 1px; }
.tree-pane { width: 191px; flex: none; }
.view-pane { width: 432px; flex: none; border-left: 1px solid #b8b6a6; margin-left: 1px; }
.tb-tree, .tb-view { height: 27px; background: linear-gradient(#f2f0e4, #e8e5d4); }
.tt1 { margin-left: 6px; }
.tb-tree .sep, .tb-view .sep { height: 25px; }

.tree { position: relative; height: 247px; background: #fff; border: 1px solid #aaa89a; overflow: hidden; width: 191px; padding-top: 1px; }
.tree-lines { position: absolute; left: 0; top: 0; width: 190px; height: 246px; }
.node { position: relative; height: 16px; display: flex; align-items: center; white-space: nowrap; }
.l0 { padding-left: 8px; } .l1 { padding-left: 27px; } .l2 { padding-left: 46px; }
.exp { width: 9px; height: 9px; flex: none; margin-right: 7px; border: 1px solid #888; background: linear-gradient(#fff, #e4e4dc); position: relative; }
.exp.none { border: 0; background: none; }
.exp.minus::before, .exp.plus::before { content: ""; position: absolute; left: 1px; top: 3px; width: 5px; height: 1px; background: #222; }
.exp.plus::after { content: ""; position: absolute; left: 3px; top: 1px; width: 1px; height: 5px; background: #222; }
.ndoc { width: 14px; height: 16px; flex: none; margin-right: 5px; }
.hscroll { position: absolute; left: 0; right: 1px; bottom: 0; height: 16px; display: flex; background: #f5f5f0; }
.hscroll .sb-btn { margin-left: 0; }
.sb-thumb.hz { margin-left: 2px; width: 108px; height: 16px; border: 1px solid #9db3e0; border-radius: 2px; background: linear-gradient(#dfe8fb, #c2d2f4); }
.sb-gap { flex: 1; }
.mini { display: block; width: 428px; height: 247px; background: #000; margin-left: 3px; }
.mini-label text { font: 10px "Liberation Sans", sans-serif; fill: #b4b4b4; }

.arrows { position: absolute; left: 0; top: 0; width: 960px; height: 837px; pointer-events: none; }
```
